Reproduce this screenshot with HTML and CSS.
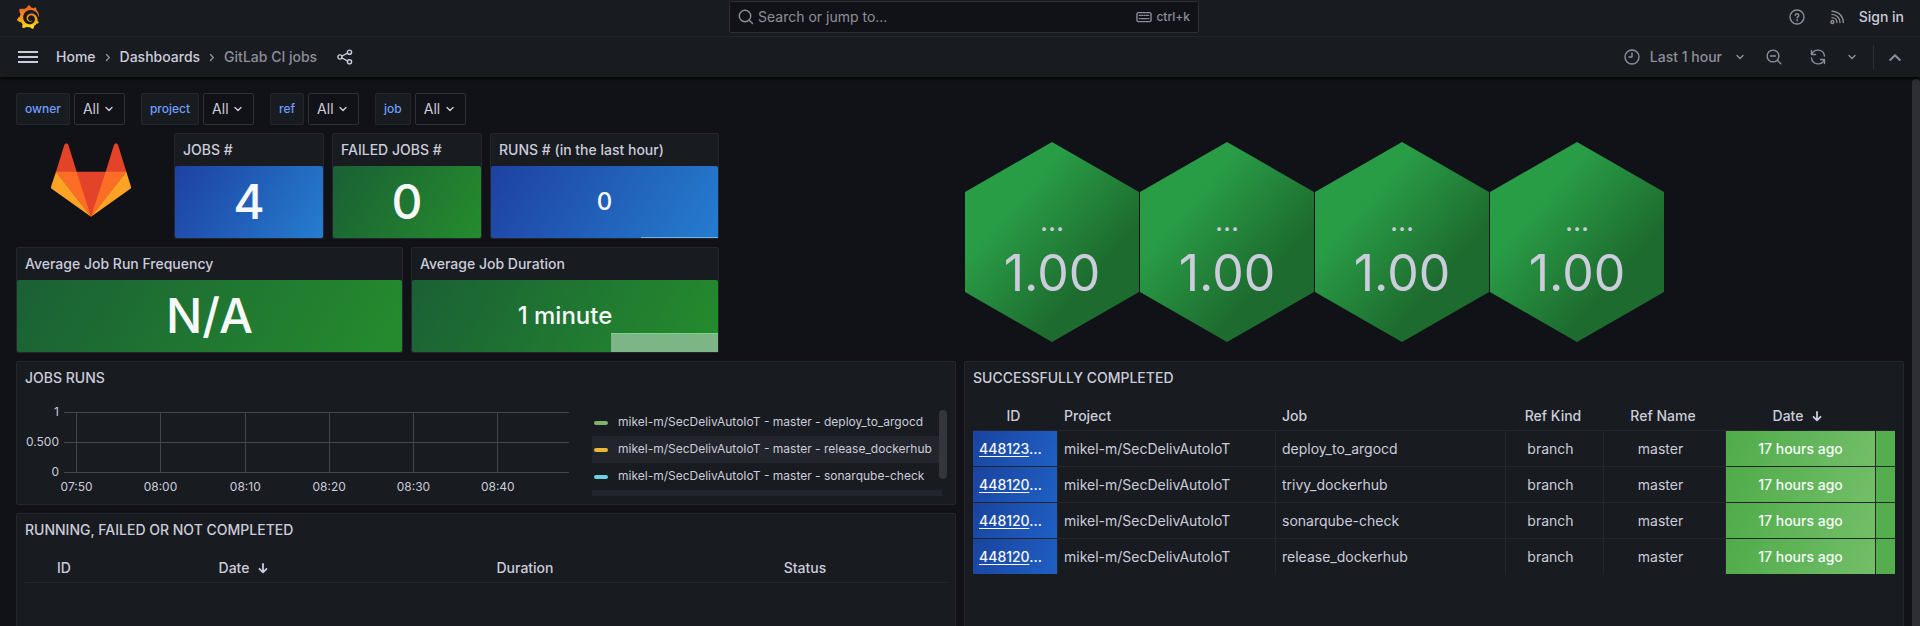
FILE: index.html
```html
<!DOCTYPE html>
<html lang="en">
<head>
<meta charset="utf-8">
<meta name="viewport" content="width=device-width, initial-scale=1">
<title>GitLab CI jobs - Dashboards</title>
<link rel="stylesheet" href="styles.css">
</head>
<body>
<svg class="sprite" aria-hidden="true">
  <symbol id="chev-down" viewBox="0 0 16 16"><path d="M5 6.5l3 3 3-3"/></symbol>
  <symbol id="arrow-down" viewBox="0 0 16 16"><path d="M8 4v8M4.500 8.800l3.500 3.500 3.500-3.500"/></symbol>
</svg>

<header class="chrome">
  <div class="topbar">
    <a class="logo" href="#" aria-label="Grafana">
      <svg viewBox="0 0 24 24" width="24" height="24">
        <defs><linearGradient id="sun" x1="0" y1="1" x2="0" y2="0"><stop offset="0" stop-color="#fcee1f"/><stop offset="0.3" stop-color="#fbac18"/><stop offset="1" stop-color="#f05a28"/></linearGradient></defs>
        <path fill="url(#sun)" d="M23.02 10.59a8.578 8.578 0 0 0-.862-3.034 8.911 8.911 0 0 0-1.789-2.445c.337-1.342-.413-2.505-.413-2.505-1.292-.08-2.113.4-2.416.62-.052-.02-.102-.044-.154-.064-.22-.089-.446-.172-.677-.247-.231-.073-.47-.14-.711-.197a9.867 9.867 0 0 0-.875-.161C14.557.753 12.94 0 12.94 0c-1.804 1.145-2.147 2.744-2.147 2.744l-.018.093c-.098.029-.2.057-.298.088-.138.042-.275.094-.413.143-.138.055-.275.107-.41.166a8.869 8.869 0 0 0-1.557.87l-.063-.029c-2.497-.955-4.716.195-4.716.195-.203 2.658.996 4.33 1.235 4.636a11.608 11.608 0 0 0-.607 2.635C1.636 12.677.953 15.014.953 15.014c1.926 2.214 4.171 2.351 4.171 2.351.003-.002.006-.002.006-.005.285.509.615.994.986 1.446.156.19.32.371.488.548-.704 2.009.099 3.68.099 3.68 2.144.08 3.553-.937 3.849-1.173a9.784 9.784 0 0 0 3.164.501h.08l.055-.003.107-.002.103-.005.003.002c1.01 1.44 2.788 1.646 2.788 1.646 1.264-1.332 1.337-2.653 1.337-2.94v-.058c0-.02-.003-.039-.003-.06.265-.187.52-.387.758-.6a7.875 7.875 0 0 0 1.415-1.7c1.43.083 2.437-.885 2.437-.885-.236-1.49-1.085-2.216-1.264-2.354l-.018-.013-.016-.013a.217.217 0 0 1-.031-.02c.008-.092.016-.18.02-.27.011-.162.016-.323.016-.48v-.253l-.005-.098-.008-.135a1.891 1.891 0 0 0-.01-.13c-.003-.042-.008-.083-.013-.125l-.016-.124-.018-.122a6.215 6.215 0 0 0-2.032-3.73 6.015 6.015 0 0 0-3.222-1.46 6.292 6.292 0 0 0-.85-.048l-.107.002h-.063l-.044.003-.104.008a4.777 4.777 0 0 0-3.335 1.695c-.332.4-.592.84-.768 1.297a4.594 4.594 0 0 0-.312 1.817l.003.091c.005.055.007.11.013.164a3.615 3.615 0 0 0 .698 1.82 3.53 3.53 0 0 0 1.827 1.282c.33.098.66.14.971.137.039 0 .078 0 .114-.002l.063-.003c.02 0 .041-.003.062-.003.034-.002.065-.007.099-.01.007 0 .018-.003.028-.003l.031-.005.06-.008a1.18 1.18 0 0 0 .112-.02c.036-.008.072-.013.109-.024a2.634 2.634 0 0 0 .914-.415c.028-.02.056-.041.085-.065a.248.248 0 0 0 .039-.35.244.244 0 0 0-.309-.06l-.078.042c-.09.044-.184.083-.283.116a2.476 2.476 0 0 1-.475.096c-.028.003-.054.006-.083.006l-.083.002c-.026 0-.054 0-.08-.002l-.102-.006h-.012l-.024.006c-.016-.003-.031-.003-.044-.006-.031-.002-.06-.007-.091-.01a2.59 2.59 0 0 1-.724-.213 2.557 2.557 0 0 1-.667-.438 2.52 2.52 0 0 1-.805-1.475 2.306 2.306 0 0 1-.029-.444l.006-.122v-.023l.002-.031c.003-.021.003-.04.005-.06a3.163 3.163 0 0 1 1.352-2.29 3.12 3.12 0 0 1 .937-.43 2.946 2.946 0 0 1 .776-.101h.06l.07.002.045.003h.026l.07.005a4.041 4.041 0 0 1 1.635.49 3.94 3.94 0 0 1 1.602 1.662 3.77 3.77 0 0 1 .397 1.414l.005.076.003.075c.002.026.002.05.002.075 0 .024.003.052 0 .07v.065l-.002.073-.008.174a6.195 6.195 0 0 1-.08.639 5.1 5.1 0 0 1-.267.927 5.31 5.31 0 0 1-.624 1.13 5.052 5.052 0 0 1-3.237 2.014 4.82 4.82 0 0 1-.649.066l-.039.003h-.287a6.607 6.607 0 0 1-1.716-.265 6.776 6.776 0 0 1-3.4-2.274 6.75 6.75 0 0 1-.746-1.15 6.616 6.616 0 0 1-.714-2.596l-.005-.083-.002-.02v-.056l-.003-.073v-.096l-.003-.104v-.07l.003-.163c.008-.22.026-.45.054-.678a8.707 8.707 0 0 1 .28-1.355c.128-.444.286-.872.473-1.277a7.04 7.04 0 0 1 1.456-2.1 5.925 5.925 0 0 1 .953-.763c.169-.111.343-.213.524-.306.089-.05.182-.091.273-.135.047-.02.093-.042.138-.062a7.177 7.177 0 0 1 .714-.267l.145-.045c.049-.015.098-.026.148-.041.098-.029.197-.052.296-.076.049-.013.1-.02.15-.033l.15-.032.151-.028.076-.013.075-.01.153-.024c.057-.01.114-.013.171-.023l.169-.021c.036-.003.073-.008.106-.01l.073-.008.036-.003.042-.002c.057-.003.114-.008.171-.01l.086-.006h.023l.037-.003.145-.007a7.999 7.999 0 0 1 1.708.125 7.917 7.917 0 0 1 2.048.68 8.253 8.253 0 0 1 1.672 1.09l.09.077.089.078c.06.052.114.107.171.159.057.052.112.106.166.16.052.055.107.107.159.164a8.671 8.671 0 0 1 1.41 1.978c.012.026.028.052.04.078l.04.078.075.156c.023.051.05.1.07.153l.065.15a8.848 8.848 0 0 1 .45 1.34.19.19 0 0 0 .201.142.186.186 0 0 0 .172-.184c.01-.246.002-.532-.024-.856z"/>
      </svg>
    </a>
    <label class="search">
      <svg class="icon" viewBox="0 0 16 16" width="16" height="16"><circle cx="7" cy="7" r="5.7"/><path d="M11.2 11.2l3.3 3.3"/></svg>
      <input type="text" placeholder="Search or jump to..." aria-label="Search or jump to">
      <svg class="icon" viewBox="0 0 16 16" width="16" height="16"><rect x="1" y="3.6" width="14" height="9" rx="1.4"/><path d="M3.4 6.4h1M5.8 6.4h1M8.2 6.4h1M10.6 6.4h2M3.4 9.6h1M5.6 9.6h5M11.8 9.6h1"/></svg>
      <span class="kbd">ctrl+k</span>
    </label>
    <div class="topbar-right">
      <button class="icon-btn" type="button" aria-label="Help"><svg class="icon" viewBox="0 0 16 16" width="16" height="16"><circle cx="8" cy="8" r="7"/><path d="M6.2 6.4c.2-1.2 1-1.6 1.8-1.6 1 0 1.8.6 1.8 1.6 0 1.2-1.7 1.3-1.7 2.5M8.1 10.4v1.3"/></svg></button>
      <button class="icon-btn" type="button" aria-label="News"><svg class="icon" viewBox="0 0 16 16" width="16" height="16"><circle cx="3.4" cy="13" r="1.5"/><path d="M3 8.6c2.8 0 4.9 2.2 4.9 5M3 5.4c4.5 0 8 3.6 8 8.2M3 2.2c6.3 0 11.3 5 11.3 11.4"/></svg></button>
      <a class="signin" href="#">Sign in</a>
    </div>
  </div>

  <div class="navbar">
    <button class="menu" type="button" aria-label="Open menu"><span></span><span></span><span></span></button>
    <nav class="crumbs" aria-label="Breadcrumbs">
      <a href="#">Home</a>
      <svg class="icon sep" viewBox="0 0 16 16" width="16" height="16"><path d="M6.5 5.500l2.800 3-2.800 3"/></svg>
      <a href="#">Dashboards</a>
      <svg class="icon sep" viewBox="0 0 16 16" width="16" height="16"><path d="M6.5 5.500l2.800 3-2.800 3"/></svg>
      <span class="here">GitLab CI jobs</span>
    </nav>
    <button class="icon-btn share" type="button" aria-label="Share dashboard"><svg class="icon" viewBox="0 0 16 16" width="16" height="16"><circle cx="3" cy="8" r="2.1"/><circle cx="12.5" cy="3.2" r="2.1"/><circle cx="12.5" cy="12.8" r="2.1"/><path d="M5 7l5.5-2.8M5 9l5.5 2.8"/></svg></button>
    <div class="nav-actions">
      <button class="time" type="button"><svg class="icon" viewBox="0 0 16 16" width="16" height="16"><circle cx="8" cy="8" r="7"/><path d="M8 4v4H5"/></svg><span>Last 1 hour</span><svg class="icon" width="16" height="16"><use href="#chev-down"/></svg></button>
      <button class="icon-btn" type="button" aria-label="Zoom out"><svg class="icon" viewBox="0 0 16 16" width="16" height="16"><circle cx="7" cy="7" r="5.9"/><path d="M11.3 11.3l3.5 3.5M4.5 7h5"/></svg></button>
      <button class="icon-btn wide" type="button" aria-label="Refresh"><svg class="icon" viewBox="0 0 16 16" width="16" height="16"><path d="M1.5 1.5v4h4M1.8 5.3A6.600 6.600 0 0 1 14.5 7M14.5 14.5v-4h-4M14.2 10.7A6.600 6.600 0 0 1 1.5 9"/></svg></button>
      <button class="icon-btn wide" type="button" aria-label="Refresh interval"><svg class="icon" width="16" height="16"><use href="#chev-down"/></svg></button>
      <span class="divider"></span>
      <button class="icon-btn" type="button" aria-label="Collapse toolbar"><svg class="icon strong" viewBox="0 0 16 16" width="16" height="16"><path d="M3.200 11l4.800-4.800 4.800 4.800"/></svg></button>
    </div>
  </div>
</header>

<main class="scroll">
  <div class="content">
    <form class="vars">
      <div class="var"><label for="v-owner">owner</label><span class="pick"><select id="v-owner"><option>All</option></select><svg class="icon" width="16" height="16"><use href="#chev-down"/></svg></span></div>
      <div class="var"><label for="v-project">project</label><span class="pick"><select id="v-project"><option>All</option></select><svg class="icon" width="16" height="16"><use href="#chev-down"/></svg></span></div>
      <div class="var"><label for="v-ref">ref</label><span class="pick"><select id="v-ref"><option>All</option></select><svg class="icon" width="16" height="16"><use href="#chev-down"/></svg></span></div>
      <div class="var"><label for="v-job">job</label><span class="pick"><select id="v-job"><option>All</option></select><svg class="icon" width="16" height="16"><use href="#chev-down"/></svg></span></div>
    </form>

    <div class="grid">
      <div class="brand">
        <svg viewBox="153 71 240 222" width="80" height="74" role="img" aria-label="GitLab">
          <path fill="#e24329" d="M168 157L193 76q6-9 12 0l25 81h87l25-81q6-9 12 0l25 81L273 292z"/>
          <path fill="#fc6d26" d="M168 157h62l43 135zM379 157h-62l-44 135z"/>
          <path fill="#fca326" d="M168 157l-15 45q-1 4 3 7l117 83zM379 157l14 45q1 4-3 7l-117 83z"/>
        </svg>
      </div>
      <section class="panel stat jobs"><h2>JOBS #</h2><div class="value blue">4</div></section>
      <section class="panel stat failed"><h2>FAILED JOBS #</h2><div class="value green">0</div></section>
      <section class="panel stat runs"><h2>RUNS # (in the last hour)</h2><div class="value blue small">0<span class="spark spark-runs"></span></div></section>
      <section class="panel stat freq"><h2>Average Job Run Frequency</h2><div class="value green">N/A</div></section>
      <section class="panel stat duration"><h2>Average Job Duration</h2><div class="value green small">1 minute<span class="spark spark-duration"></span></div></section>

      <ul class="polystat">
        <li><span class="name">...</span><span class="num">1.00</span></li>
        <li><span class="name">...</span><span class="num">1.00</span></li>
        <li><span class="name">...</span><span class="num">1.00</span></li>
        <li><span class="name">...</span><span class="num">1.00</span></li>
      </ul>

      <section class="panel chart">
        <h2>JOBS RUNS</h2>
        <div class="chart-body">
          <svg class="axes">
            <text x="34" y="22">1</text><text x="34" y="52">0.500</text><text x="34" y="82">0</text>
          </svg>
          <svg class="plot" role="img" aria-label="Jobs runs over time">
            <path d="M0 18.5h3000M0 48.5h3000M0 78.5h3000"/>
            <line x1="2.5%" x2="2.5%" y1="18" y2="78"/><line x1="19.1%" x2="19.1%" y1="18" y2="78"/><line x1="35.9%" x2="35.9%" y1="18" y2="78"/><line x1="52.5%" x2="52.5%" y1="18" y2="78"/><line x1="69.2%" x2="69.2%" y1="18" y2="78"/><line x1="85.9%" x2="85.9%" y1="18" y2="78"/>
          </svg>
          <svg class="ticks">
            <text x="2.5%" y="12">07:50</text><text x="19.1%" y="12">08:00</text><text x="35.9%" y="12">08:10</text><text x="52.5%" y="12">08:20</text><text x="69.2%" y="12">08:30</text><text x="85.9%" y="12">08:40</text>
          </svg>
          <div class="legend">
            <ul>
              <li><i class="key k-green"></i>mikel-m/SecDelivAutoIoT - master - deploy_to_argocd</li>
              <li><i class="key k-yellow"></i>mikel-m/SecDelivAutoIoT - master - release_dockerhub</li>
              <li><i class="key k-cyan"></i>mikel-m/SecDelivAutoIoT - master - sonarqube-check</li>
              <li></li>
            </ul>
            <span class="thumb"></span>
          </div>
        </div>
      </section>

      <section class="panel running">
        <h2>RUNNING, FAILED OR NOT COMPLETED</h2>
        <div class="table-wrap">
          <table>
            <colgroup><col class="c-id-sm"><col><col><col></colgroup>
            <thead><tr><th>ID</th><th>Date<svg class="icon sort" width="16" height="16"><use href="#arrow-down"/></svg></th><th>Duration</th><th>Status</th></tr></thead>
          </table>
        </div>
      </section>

      <section class="panel success">
        <h2>SUCCESSFULLY COMPLETED</h2>
        <div class="table-wrap">
          <table>
            <colgroup><col class="c-id"><col class="c-project"><col><col class="c-kind"><col class="c-name"><col class="c-date"><col class="c-last"></colgroup>
            <thead><tr><th>ID</th><th class="left">Project</th><th class="left">Job</th><th>Ref Kind</th><th>Ref Name</th><th>Date<svg class="icon sort" width="16" height="16"><use href="#arrow-down"/></svg></th><th></th></tr></thead>
            <tbody>
              <tr><td class="id"><a href="#">448123</a>...</td><td>mikel-m/SecDelivAutoIoT</td><td>deploy_to_argocd</td><td class="mid">branch</td><td class="mid">master</td><td class="date">17 hours ago</td><td class="more"></td></tr>
              <tr><td class="id"><a href="#">448120</a>...</td><td>mikel-m/SecDelivAutoIoT</td><td>trivy_dockerhub</td><td class="mid">branch</td><td class="mid">master</td><td class="date">17 hours ago</td><td class="more"></td></tr>
              <tr><td class="id"><a href="#">448120</a>...</td><td>mikel-m/SecDelivAutoIoT</td><td>sonarqube-check</td><td class="mid">branch</td><td class="mid">master</td><td class="date">17 hours ago</td><td class="more"></td></tr>
              <tr><td class="id"><a href="#">448120</a>...</td><td>mikel-m/SecDelivAutoIoT</td><td>release_dockerhub</td><td class="mid">branch</td><td class="mid">master</td><td class="date">17 hours ago</td><td class="more"></td></tr>
            </tbody>
          </table>
        </div>
      </section>
    </div>
  </div>
  <span class="page-thumb"></span>
</main>
</body>
</html>
```

FILE: styles.css
```css
:root {
  --canvas: #111217;
  --surface: #181b1f;
  --line: #24262b;
  --line-strong: #2e3036;
  --text: #ccccdc;
  --muted: #8e8e9a;
}

* { box-sizing: border-box; }

body {
  margin: 0;
  height: 100vh;
  display: flex;
  flex-direction: column;
  overflow: hidden;
  background: var(--canvas);
  color: var(--text);
  font: 400 14px/22px Inter, "Liberation Sans", sans-serif;
}

a { color: inherit; text-decoration: none; }
ul { list-style: none; margin: 0; padding: 0; }
h2 { margin: 0; font-size: 14px; font-weight: 500; }
button, input, select { font: inherit; color: inherit; }
button { display: flex; align-items: center; padding: 0; border: 0; background: none; cursor: pointer; }

.sprite { display: none; }
.icon { flex: none; display: block; fill: none; stroke: currentColor; stroke-width: 1.4; stroke-linecap: round; stroke-linejoin: round; }
.strong { stroke-width: 2; }

/* Header */
.chrome { flex: none; position: relative; z-index: 1; background: var(--surface); box-shadow: 0 1px 4px #000; }
.topbar {
  display: grid;
  grid-template-columns: 1fr 470px 1fr;
  height: 37px;
  padding: 1px 16px 3px 24px;
  border-bottom: 1px solid var(--line);
}
.logo { align-self: center; width: 24px; height: 24px; margin-left: -8px; }
.logo svg { display: block; }
.search {
  display: flex;
  align-items: center;
  height: 32px;
  padding: 0 8px;
  background: var(--canvas);
  border: 1px solid var(--line-strong);
  border-radius: 2px;
  color: var(--muted);
}
.search input { flex: 1; min-width: 0; padding: 0 4px; border: 0; outline: 0; background: none; }
.search input::placeholder { color: var(--muted); opacity: 1; }
.kbd { margin-left: 4px; font-size: 12px; line-height: 18px; font-weight: 500; }
.topbar-right { display: flex; align-items: center; justify-content: flex-end; color: var(--muted); }
.topbar-right .icon-btn { margin-right: 24px; }
.topbar-right .icon-btn + .icon-btn { margin-right: 14px; }
.signin { color: var(--text); font-weight: 500; }

.navbar { display: flex; align-items: center; height: 40px; padding: 0 17px 0 18px; }
.menu { flex-direction: column; gap: 3px; width: 20px; }
.menu span { width: 20px; height: 2px; background: var(--text); }
.crumbs { display: flex; align-items: center; margin-left: 18px; gap: 4px; font-weight: 500; }
.sep { color: var(--muted); }
.here { color: var(--muted); }
.share { margin-left: 20px; }
.nav-actions { display: flex; align-items: center; margin-left: auto; color: var(--muted); }
.time { gap: 10px; margin-right: 18px; font-weight: 500; }
.wide { margin-left: 28px; }
.wide + .wide { margin-left: 18px; }
.divider { width: 1px; height: 24px; margin: 0 13px; background: var(--line-strong); }

/* Page body */
.scroll { flex: 1; min-height: 0; position: relative; overflow: hidden; }
.content { padding: 16px; }
.page-thumb { position: absolute; top: 2px; right: 0; bottom: 0; width: 8px; border-radius: 4px 4px 0 0; background: #2e2f34; }

.vars { display: flex; gap: 16px; margin-bottom: 8px; }
.var { display: flex; gap: 4px; }
.var label {
  padding: 0 8px;
  border: 1px solid var(--line);
  border-radius: 2px;
  background: var(--surface);
  color: #6e9fff;
  font-size: 12px;
  font-weight: 500;
  line-height: 30px;
}
.pick { position: relative; }
.pick select { appearance: none; display: block; width: 51px; height: 32px; padding: 0 8px; border: 1px solid var(--line-strong); border-radius: 2px; background: var(--canvas); }
.pick .icon { position: absolute; top: 8px; right: 8px; pointer-events: none; }

.grid { display: grid; grid-template-columns: repeat(24, minmax(0, 1fr)); grid-auto-rows: 30px; gap: 8px; }
.panel { display: flex; flex-direction: column; min-width: 0; background: var(--surface); border: 1px solid var(--line); border-radius: 2px; }
.panel h2 { flex: none; padding: 0 8px; line-height: 32px; white-space: nowrap; overflow: hidden; }

.brand { grid-area: 1 / 1 / span 3 / span 2; display: flex; justify-content: center; padding-top: 10px; }
.jobs { grid-area: 1 / 3 / span 3 / span 2; }
.failed { grid-area: 1 / 5 / span 3 / span 2; }
.runs { grid-area: 1 / 7 / span 3 / span 3; }
.freq { grid-area: 4 / 1 / span 3 / span 5; }
.duration { grid-area: 4 / 6 / span 3 / span 4; }
.polystat { grid-area: 1 / 13 / span 6 / span 12; }
.chart { grid-area: 7 / 1 / span 4 / span 12; }
.running { grid-area: 11 / 1 / span 6 / span 12; }
.success { grid-area: 7 / 13 / span 10 / span 12; }

/* Stat panels */
.value { flex: 1; position: relative; display: flex; align-items: center; justify-content: center; border-radius: 2px; color: #f7f8fa; font-size: 48px; line-height: 56px; font-weight: 500; }
.small { font-size: 24px; }
.blue { background: linear-gradient(120deg, #1e41a2, #257dcf); }
.green { background: linear-gradient(120deg, #1a6035, #258c2d); }
.spark { position: absolute; right: 0; bottom: 0; }
.spark-runs { width: 34%; height: 1px; background: #6fb0ea; }
.spark-duration { width: 35%; height: 19px; border-top: 1px solid #73d98a; background: #7db586; }

/* Hexagons */
.polystat { display: flex; gap: 1px; padding: 9px 1px; }
.polystat li {
  display: flex;
  flex-direction: column;
  align-items: center;
  gap: 6px;
  width: 174px;
  height: 200px;
  padding-top: 63px;
  clip-path: polygon(50% 0, 100% 25%, 100% 75%, 50% 100%, 0 75%, 0 25%);
  background: linear-gradient(to bottom right, #299c46 30%, #1d6b2e 71%);
}
.name { font-size: 28px; line-height: 32px; }
.num { font-size: 50px; line-height: 60px; }

/* Time series */
.chart-body { flex: 1; min-height: 0; display: grid; grid-template-columns: 39px minmax(0, 1fr) 378px; grid-template-rows: 85px minmax(0, 1fr); padding: 0 8px 8px; }
.chart-body svg { display: block; width: 100%; height: 100%; }
.chart-body text { fill: var(--text); font-size: 12px; }
.axes { grid-area: 1 / 1; text-anchor: end; }
.plot { grid-area: 1 / 2; fill: none; stroke: #434549; shape-rendering: crispEdges; }
.ticks { grid-area: 2 / 2; overflow: visible; text-anchor: middle; }
.legend { grid-area: 1 / 3 / span 2; min-height: 0; position: relative; overflow: hidden; margin: 15px 0 0 23px; }
.legend ul { margin-right: 5px; }
.legend li { display: flex; align-items: center; gap: 10px; height: 27px; padding: 0 0 2px 2px; font-size: 12px; line-height: 18px; white-space: nowrap; }
.legend li:nth-child(even) { background: #22252b; }
.key { flex: none; width: 14px; height: 4px; margin-top: 2px; border-radius: 2px; }
.k-green { background: #7eb26d; }
.k-yellow { background: #eab839; }
.k-cyan { background: #6ed0e0; }
.thumb { position: absolute; top: 1px; right: 0; width: 8px; height: 69px; border-radius: 4px; background: #34363b; }

/* Tables */
.table-wrap { padding: 8px 8px 0; overflow: hidden; }
table { width: 100%; table-layout: fixed; border-collapse: separate; border-spacing: 0; }
th { height: 29px; padding: 0 10px 0 6px; border-bottom: 1px solid var(--line); font-weight: 500; line-height: 22px; text-align: center; white-space: nowrap; }
.left { text-align: left; }
.sort { display: inline-block; margin-left: 6px; vertical-align: -3px; stroke-width: 1.8; }
td { height: 36px; padding: 0 6px; border-right: 1px solid var(--line); border-bottom: 1px solid var(--line); white-space: nowrap; overflow: hidden; }
tbody tr:last-child td { border-bottom-color: transparent; }
.c-id-sm { width: 82px; }
.c-id { width: 85px; }
.c-project { width: 218px; }
.c-kind { width: 98px; }
.c-name { width: 122px; }
.c-date { width: 150px; }
.c-last { width: 19px; }
.mid { padding-right: 14px; text-align: center; }
.id, .date, .more { background-clip: padding-box; color: #f7f8fa; font-weight: 500; }
.id { background-image: linear-gradient(120deg, #1a439e, #1f60c4); }
.id a { text-decoration: underline; text-underline-offset: 2px; }
.date { background-image: linear-gradient(120deg, #4fab49, #73bf69); text-align: center; }
.more { background-color: #54ae4d; border-right: 0; padding: 0; }
```
